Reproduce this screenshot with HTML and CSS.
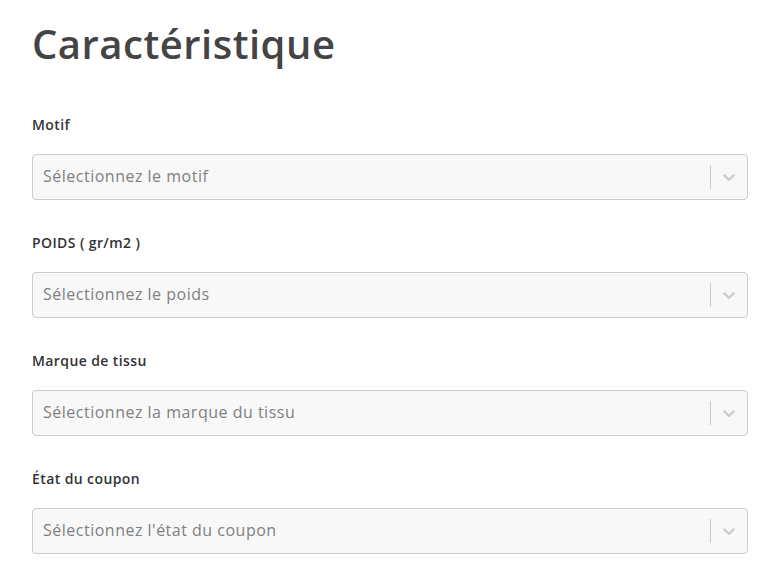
FILE: index.html
```html
<!DOCTYPE html>
<html lang="fr">
<head>
<meta charset="utf-8">
<title>Caractéristique</title>
<link rel="stylesheet" href="styles.css">
</head>
<body>
<main class="page">
  <h1 class="title">Caractéristique</h1>
  <div class="fields">
    <div class="field">
      <label class="label">Motif</label>
      <div class="select">
        <span class="placeholder">Sélectionnez le motif</span>
        <span class="sep"></span>
        <span class="indicator"><svg viewBox="0 0 20 20" width="20" height="20"><path d="M4.516 7.548c0.436-0.446 1.043-0.481 1.576 0l3.908 3.747 3.908-3.747c0.533-0.481 1.141-0.446 1.574 0 0.436 0.445 0.408 1.197 0 1.615-0.406 0.418-4.695 4.502-4.695 4.502-0.217 0.223-0.502 0.335-0.787 0.335s-0.57-0.112-0.789-0.335c0 0-4.287-4.084-4.695-4.502s-0.436-1.17 0-1.615z"/></svg></span>
      </div>
    </div>
    <div class="field">
      <label class="label">POIDS ( gr/m2 )</label>
      <div class="select">
        <span class="placeholder">Sélectionnez le poids</span>
        <span class="sep"></span>
        <span class="indicator"><svg viewBox="0 0 20 20" width="20" height="20"><path d="M4.516 7.548c0.436-0.446 1.043-0.481 1.576 0l3.908 3.747 3.908-3.747c0.533-0.481 1.141-0.446 1.574 0 0.436 0.445 0.408 1.197 0 1.615-0.406 0.418-4.695 4.502-4.695 4.502-0.217 0.223-0.502 0.335-0.787 0.335s-0.57-0.112-0.789-0.335c0 0-4.287-4.084-4.695-4.502s-0.436-1.170 0-1.615z"/></svg></span>
      </div>
    </div>
    <div class="field">
      <label class="label">Marque de tissu</label>
      <div class="select">
        <span class="placeholder">Sélectionnez la marque du tissu</span>
        <span class="sep"></span>
        <span class="indicator"><svg viewBox="0 0 20 20" width="20" height="20"><path d="M4.516 7.548c0.436-0.446 1.043-0.481 1.576 0l3.908 3.747 3.908-3.747c0.533-0.481 1.141-0.446 1.574 0 0.436 0.445 0.408 1.197 0 1.615-0.406 0.418-4.695 4.502-4.695 4.502-0.217 0.223-0.502 0.335-0.787 0.335s-0.57-0.112-0.789-0.335c0 0-4.287-4.084-4.695-4.502s-0.436-1.170 0-1.615z"/></svg></span>
      </div>
    </div>
    <div class="field">
      <label class="label">État du coupon</label>
      <div class="select">
        <span class="placeholder">Sélectionnez l'état du coupon</span>
        <span class="sep"></span>
        <span class="indicator"><svg viewBox="0 0 20 20" width="20" height="20"><path d="M4.516 7.548c0.436-0.446 1.043-0.481 1.576 0l3.908 3.747 3.908-3.747c0.533-0.481 1.141-0.446 1.574 0 0.436 0.445 0.408 1.197 0 1.615-0.406 0.418-4.695 4.502-4.695 4.502-0.217 0.223-0.502 0.335-0.787 0.335s-0.57-0.112-0.789-0.335c0 0-4.287-4.084-4.695-4.502s-0.436-1.170 0-1.615z"/></svg></span>
      </div>
    </div>
  </div>
</main>
</body>
</html>
```

FILE: styles.css
```css
html, body {
  margin: 0;
  padding: 0;
  background: #ffffff;
}

body {
  font-family: "Open Sans", "Liberation Sans", sans-serif;
  color: #444;
}

.page {
  padding: 20px 36px 0 32px;
}

.title {
  margin: 0;
  font-size: 40px;
  line-height: 48px;
  font-weight: 600;
  color: #444;
  letter-spacing: 0.5px;
}

.fields {
  margin-top: 47px;
  display: flex;
  flex-direction: column;
  gap: 33px;
}

.field {
  display: flex;
  flex-direction: column;
  gap: 19px;
}

.label {
  font-size: 14px;
  line-height: 20px;
  font-weight: 600;
  color: #333;
  letter-spacing: 0.4px;
}

.select {
  box-sizing: border-box;
  height: 46px;
  display: flex;
  align-items: center;
  border: 1px solid #ccc;
  border-radius: 4px;
  background: #f8f8f8;
}

.placeholder {
  flex: 1;
  padding: 0 10px;
  margin-top: -2px;
  font-size: 16px;
  color: #808080;
  white-space: nowrap;
  letter-spacing: 0.5px;
}

.sep {
  align-self: stretch;
  width: 1px;
  margin: 10px 0;
  background: #ccc;
}

.indicator {
  display: flex;
  padding: 8px;
}

.indicator svg {
  fill: #ccc;
  display: block;
}
```
